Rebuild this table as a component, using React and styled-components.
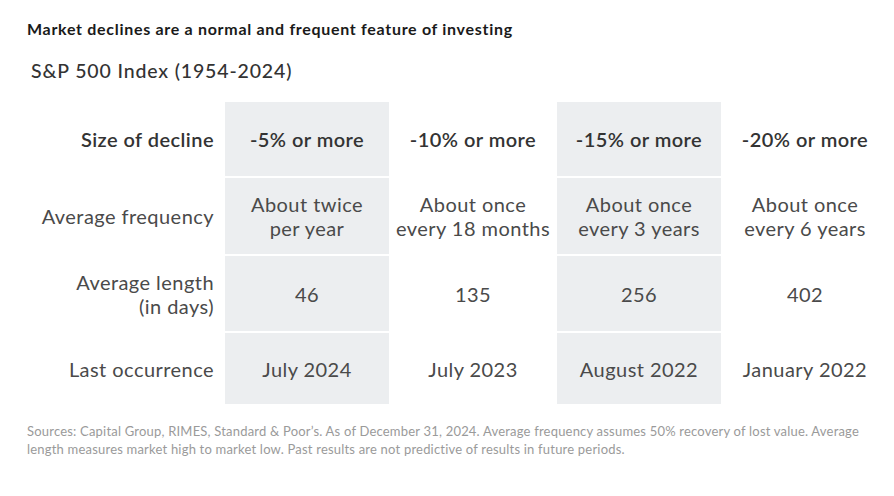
import React from "react";
import styled, { createGlobalStyle } from "styled-components";

const Global = createGlobalStyle`
  html, body { margin: 0; padding: 0; background: #ffffff; }
  body { font-family: Lato, "Open Sans", sans-serif; }
`;

const Page = styled.div`
  width: 894px;
  height: 496px;
  box-sizing: border-box;
  padding: 19px 0 0 27px;
  background: #fff;
  color: #333;
`;

const Title = styled.h1`
  margin: 0;
  font-size: 16px;
  line-height: 20px;
  font-weight: 700;
  letter-spacing: 0.7px;
  color: #1a1a1a;
`;

const Subtitle = styled.h2`
  margin: 20px 0 0 4px;
  font-size: 19.5px;
  line-height: 24px;
  font-weight: 500;
  letter-spacing: 0.85px;
  color: #333;
`;

const Table = styled.div`
  margin-top: 19px;
  display: grid;
  grid-template-columns: 196px repeat(4, 164px);
  grid-template-rows: 74px 76px 75px 71px;
  column-gap: 2px;
  row-gap: 2px;
`;

const Label = styled.div`
  display: flex;
  align-items: center;
  justify-content: flex-end;
  text-align: right;
  padding-right: 9px;
  font-size: 20px;
  line-height: 24px;
  letter-spacing: 0.45px;
  font-weight: ${(p) => (p.$head ? 600 : 400)};
  color: ${(p) => (p.$head ? "#333" : "#4a4a4a")};
`;

const Cell = styled.div`
  display: flex;
  align-items: center;
  justify-content: center;
  text-align: center;
  background: ${(p) => (p.$shaded ? "#eceef0" : "transparent")};
  font-size: 20px;
  line-height: 24px;
  letter-spacing: 0.45px;
  font-weight: ${(p) => (p.$head ? 600 : 400)};
  color: ${(p) => (p.$head ? "#333" : "#4a4a4a")};
`;

const Footnote = styled.p`
  margin: 17.5px 0 0 0;
  width: 836px;
  font-size: 13px;
  line-height: 18.5px;
  letter-spacing: 0.2px;
  color: #9a9a9a;
`;

const cols = ["-5% or more", "-10% or more", "-15% or more", "-20% or more"];
const rows = [
  {
    label: ["Average frequency"],
    values: [
      ["About twice", "per year"],
      ["About once", "every 18 months"],
      ["About once", "every 3 years"],
      ["About once", "every 6 years"],
    ],
  },
  {
    label: ["Average length", "(in days)"],
    values: [["46"], ["135"], ["256"], ["402"]],
  },
  {
    label: ["Last occurrence"],
    values: [["July 2024"], ["July 2023"], ["August 2022"], ["January 2022"]],
  },
];

const Lines = ({ lines }) =>
  lines.map((l, i) => (
    <React.Fragment key={i}>
      {i > 0 && <br />}
      {l}
    </React.Fragment>
  ));

export default function App() {
  return (
    <Page>
      <Global />
      <Title>Market declines are a normal and frequent feature of investing</Title>
      <Subtitle>S&amp;P 500 Index (1954-2024)</Subtitle>
      <Table>
        <Label $head>Size of decline</Label>
        {cols.map((c, i) => (
          <Cell key={c} $head $shaded={i % 2 === 0}>
            {c}
          </Cell>
        ))}
        {rows.map((r) => (
          <React.Fragment key={r.label[0]}>
            <Label>
              <span>
                <Lines lines={r.label} />
              </span>
            </Label>
            {r.values.map((v, i) => (
              <Cell key={i} $shaded={i % 2 === 0}>
                <span>
                  <Lines lines={v} />
                </span>
              </Cell>
            ))}
          </React.Fragment>
        ))}
      </Table>
      <Footnote>
        Sources: Capital Group, RIMES, Standard &amp; Poor’s. As of December 31, 2024. Average frequency assumes 50% recovery of lost value. Average length measures market high to market low. Past results are not predictive of results in future periods.
      </Footnote>
    </Page>
  );
}
